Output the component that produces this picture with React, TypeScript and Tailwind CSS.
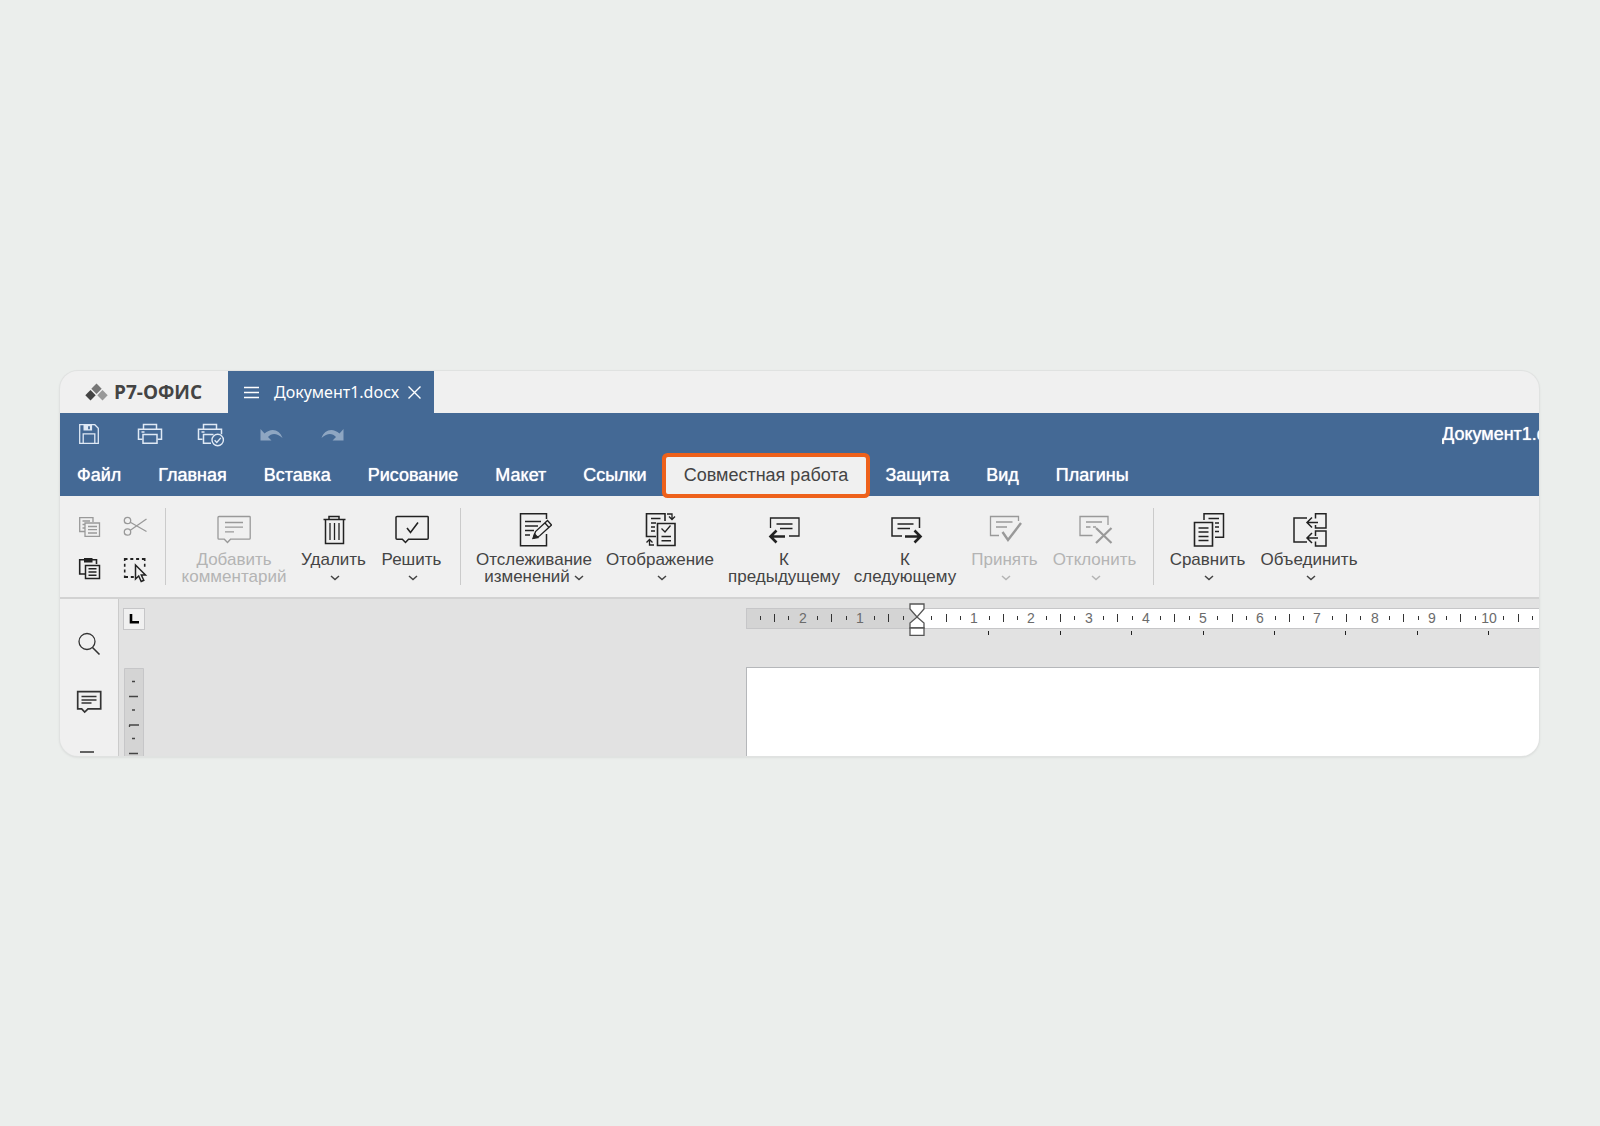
import type { ReactNode } from "react";
import clsx from "clsx";

interface IconProps {
  children: ReactNode;
  size?: number;
}

function Icon({ children, size = 36 }: IconProps) {
  return (
    <svg
      width={size}
      height={size}
      viewBox={`0 0 ${size} ${size}`}
      fill="none"
      stroke="currentColor"
      strokeWidth="1.3"
      className="shrink-0"
      aria-hidden
    >
      {children}
    </svg>
  );
}

function Chevron({ className }: { className?: string }) {
  return (
    <svg width="10" height="6" viewBox="0 0 10 6" fill="none" stroke="currentColor" strokeWidth="1.5" className={className} aria-hidden>
      <path d="M1 1l4 3.5L9 1" />
    </svg>
  );
}

const icons = {
  save: (
    <Icon size={28}>
      <path d="M4.7 4.7h15.1l3.5 3.5v15.1H4.7z" />
      <path d="M8.2 23.3v-9.5h11.6v9.5" />
      <path d="M8.5 5h8.6v5.6H8.5z" fill="currentColor" stroke="none" />
      <path d="M14 6.2v3" stroke="#446995" strokeWidth="1.8" />
    </Icon>
  ),
  print: (
    <Icon size={28}>
      <path d="M7.5 9V4.5h13V9M6.5 19.3H2.5V9.2h23v10.1h-4" strokeWidth="1.5" />
      <path d="M7 14.5h14v8.8H7zM5.5 12h3" strokeWidth="1.5" />
    </Icon>
  ),
  quickPrint: (
    <Icon size={28}>
      <path d="M6.5 9V4.5h13V9M5.5 19.3h-4V9.2h23v5" strokeWidth="1.5" />
      <path d="M14 23.3H6.5v-8.8h10M4.5 12h3" strokeWidth="1.5" />
      <circle cx="20.7" cy="20" r="5.7" strokeWidth="1.4" />
      <path d="M17.6 20.2l2.2 2.3 4-4.6" strokeWidth="1.4" />
    </Icon>
  ),
  undo: (
    <Icon size={28}>
      <path d="M2.5 9v11.5h11L10 17c3.5-4 8.500-4.500 14.500 1C21.500 9 13 7.500 6.500 13.500z" fill="currentColor" stroke="none" />
    </Icon>
  ),
  redo: (
    <Icon size={28}>
      <path d="M24.500 9v11.500h-11L17 17C13.500 13 8.500 12.500 2.500 18 5.500 9 14 7.500 20.500 13.500z" fill="currentColor" stroke="none" />
    </Icon>
  ),
  copy: (
    <Icon size={28}>
      <path d="M9 17.500H3.700V3.700H17V8" />
      <path d="M9 9h14.500v13.300H9zM12 12.500h9M12 15.700h9M12 19h9M6.500 7H14M6.500 10.500h2M6.500 14h2" />
    </Icon>
  ),
  cut: (
    <Icon size={28}>
      <circle cx="6.500" cy="6.500" r="3.200" />
      <circle cx="6.500" cy="18" r="3.200" />
      <path d="M9.300 8.200L25.500 17.500M9.300 16.300L25.500 5" />
    </Icon>
  ),
  paste: (
    <Icon size={28}>
      <path d="M9 19H3.700V4.700h16.800V9" strokeWidth="1.600" />
      <path d="M8 3h8.500v4.500H8z" fill="currentColor" stroke="none" />
      <path d="M9.500 10.500h14v13h-14zM12.500 13.700h8M12.500 17h8M12.500 20.300h8" strokeWidth="1.500" />
    </Icon>
  ),
  select: (
    <Icon size={28}>
      <path d="M3.500 4H24" strokeDasharray="3 2.800" strokeWidth="1.800" />
      <path d="M3.700 3v20M23.700 3v10" strokeDasharray="3 2.800" strokeWidth="1.600" />
      <path d="M4 22h10" strokeDasharray="3 2.800" strokeWidth="1.800" />
      <path d="M14.500 10v14l3.200-3 2.500 5.500 2.600-1.200-2.500-5.300h4.200z" fill="#f0f0f0" strokeWidth="1.500" />
    </Icon>
  ),
  addComment: (
    <Icon>
      <path d="M3 4.500h30.500a.7.7 0 0 1 .7.700v21a1 1 0 0 1-1 1H14.500L11.500 30.500l-3.200-3.300H3a1 1 0 0 1-1-1V5.500a1 1 0 0 1 1-1z" />
      <path d="M9 10.500h18M9 15.200h18M9 19.800h9" />
    </Icon>
  ),
  remove: (
    <Icon>
      <path d="M13 7.500V4.500h10v3M7.500 7.500h22M9.500 7.500v24h18v-24" strokeWidth="1.500" />
      <path d="M14 11v17M18.500 11v17M23 11v17" />
    </Icon>
  ),
  resolve: (
    <Icon>
      <path d="M3 4.500h30.500a.7.7 0 0 1 .7.700v21a1 1 0 0 1-1 1H14.500L11.500 30.500l-3.200-3.300H3a1 1 0 0 1-1-1V5.500a1 1 0 0 1 1-1z" strokeWidth="1.500" />
      <path d="M13 16l3.500 4.500 7.500-10" strokeWidth="1.600" />
    </Icon>
  ),
  track: (
    <Icon>
      <path d="M30.500 7V1.700H4.500v32h26V22" strokeWidth="1.500" />
      <path d="M9 9.500h16M9 14h13M9 18.500h9M9 23h5" strokeWidth="1.600" />
      <path d="M17.500 26l2-6.500L31.500 8.500l4 4.500-12 11zM29 11l4 4.500" />
      <path d="M17 26.500l1.500-4.500 3.500 3.500z" fill="currentColor" />
    </Icon>
  ),
  display: (
    <Icon>
      <path d="M14 24.500H4.500V1.700h18.500V9" strokeWidth="1.600" />
      <path d="M9 6.500h9.500M9 11h5M9 15h4M9 19h4" strokeWidth="1.500" />
      <path d="M15.500 11.500h17.500v22h-17.500zM19.500 24.500h9.500M19.500 28.800h9.500" strokeWidth="1.600" />
      <path d="M19.500 16.500l3.500 3.500 5.500-6.500" />
      <path d="M25 2h5v5M27 4.500l3 3 3-3M12 33H7.500v-5M4.500 30.500l3-3 3 3" />
    </Icon>
  ),
  previous: (
    <Icon>
      <path d="M4.500 16V6h28.500v18H23" />
      <path d="M10.500 12h16M14 16.500h12.500" />
      <path d="M19 24.500H5M10.500 18.500L4.500 24.500l6 6" strokeWidth="2.600" />
    </Icon>
  ),
  next: (
    <Icon>
      <path d="M32.500 16V6H5v18h10" strokeWidth="1.500" />
      <path d="M10.500 12h16M10.500 16.500h12.500" />
      <path d="M18 24.500h15M27.500 18.500l6 6-6 6" strokeWidth="2.600" />
    </Icon>
  ),
  accept: (
    <Icon>
      <path d="M31.500 9V4.500h-28v19h8.500" />
      <path d="M9 10h16.500M9 15h11" />
      <path d="M15.500 20l5.500 8L34 11" strokeWidth="2.400" />
    </Icon>
  ),
  reject: (
    <Icon>
      <path d="M31 13V4.500H3v19h12.500" />
      <path d="M9 10h16M9 15h4.500M16 15h3" />
      <path d="M19 16l15.500 15M34.500 16L19 31" strokeWidth="2.200" />
    </Icon>
  ),
  compare: (
    <Icon>
      <path d="M14 8V1.700h19.500v23.500H25" strokeWidth="1.500" />
      <path d="M4.500 10.500h18v23.500h-18z" strokeWidth="1.600" />
      <path d="M8.500 16h10M8.500 20h10M8.500 24.500h10M8.500 28.500h10M18.500 6.500h10.500M25 11h4M25 15h4M25 19.500h4" strokeWidth="1.500" />
    </Icon>
  ),
  merge: (
    <Icon>
      <path d="M16 6H3v24h13" strokeWidth="1.500" />
      <path d="M24.500 6.500V1.700H35V16H24.500v-3M24.500 24v-5H35v15H24.500v-4.500" strokeWidth="1.500" />
      <path d="M27 10.500H16.500M21 5.500l-5 5 5 5M27 26H16.500M21 21l-5 5 5 5" strokeWidth="1.500" />
    </Icon>
  ),
};

const menu = [
  "Файл",
  "Главная",
  "Вставка",
  "Рисование",
  "Макет",
  "Ссылки",
  "Совместная работа",
  "Защита",
  "Вид",
  "Плагины",
];

const ACTIVE = "Совместная работа";

const quickActions = [
  { label: "Сохранить", icon: icons.save },
  { label: "Печать", icon: icons.print },
  { label: "Быстрая печать", icon: icons.quickPrint },
  { label: "Отменить", icon: icons.undo, disabled: true },
  { label: "Повторить", icon: icons.redo, disabled: true },
];

const clipboard = [
  { label: "Копировать", icon: icons.copy, disabled: true },
  { label: "Вырезать", icon: icons.cut, disabled: true },
  { label: "Вставить", icon: icons.paste },
  { label: "Выделить всё", icon: icons.select },
];

interface Tool {
  lines: string[];
  icon: ReactNode;
  width: string;
  menu?: boolean;
  disabled?: boolean;
}

const toolGroups: Tool[][] = [
  [
    { lines: ["Добавить", "комментарий"], icon: icons.addComment, width: "w-[120px]", disabled: true },
    { lines: ["Удалить"], icon: icons.remove, width: "w-[79px]", menu: true },
    { lines: ["Решить"], icon: icons.resolve, width: "w-[77px]", menu: true },
  ],
  [
    { lines: ["Отслеживание", "изменений"], icon: icons.track, width: "w-[130px]", menu: true },
    { lines: ["Отображение"], icon: icons.display, width: "w-[122px]", menu: true },
    { lines: ["К", "предыдущему"], icon: icons.previous, width: "w-[126px]" },
    { lines: ["К", "следующему"], icon: icons.next, width: "w-[116px]" },
    { lines: ["Принять"], icon: icons.accept, width: "w-[83px]", menu: true, disabled: true },
    { lines: ["Отклонить"], icon: icons.reject, width: "w-[97px]", menu: true, disabled: true },
  ],
  [
    { lines: ["Сравнить"], icon: icons.compare, width: "w-[91px]", menu: true },
    { lines: ["Объединить"], icon: icons.merge, width: "w-[112px]", menu: true },
  ],
];

function ToolButton({ tool }: { tool: Tool }) {
  return (
    <button
      type="button"
      disabled={tool.disabled}
      className={clsx(
        "flex shrink-0 flex-col items-center text-[17px] leading-[17px] whitespace-nowrap",
        tool.width,
        tool.disabled ? "text-[#b4b4b4]" : "text-[#444]"
      )}
    >
      <span className={tool.disabled ? "text-[#999]" : "text-[#222]"}>{tool.icon}</span>
      <span className="mt-[3px]">{tool.lines[0]}</span>
      <span className="flex h-[17px] items-center gap-1">
        {tool.lines[1]}
        {tool.menu && <Chevron className={clsx("mt-[3px]", !tool.lines[1] && "ml-[3px]")} />}
      </span>
    </button>
  );
}

// one centimetre on the ruler
const UNIT = 57.2;
const ORIGIN = 171;

function HorizontalRuler() {
  const quarters = Array.from({ length: 55 }, (_, i) => i - 11);
  const tabStops = Array.from({ length: 8 }, (_, i) => i + 1);

  return (
    <svg width="793" height="37" viewBox="0 0 793 37" className="block" aria-hidden>
      <rect x="0" y="9" width="793" height="21" fill="#fff" />
      <rect x="0" y="9" width={ORIGIN} height="21" fill="#d4d4d4" />
      <path d="M0 9.500h793M0 29.500h793M.5 9v21" stroke="#c6c6c8" />
      {quarters.map((q) => {
        const x = Math.round(ORIGIN + (q * UNIT) / 4);
        if (q === 0) return null;
        if (q % 4 === 0) {
          return (
            <text key={q} x={x} y="24" textAnchor="middle" fontSize="14" fill="#6b6b6b">
              {Math.abs(q / 4)}
            </text>
          );
        }
        const half = q % 2 === 0;
        return <rect key={q} x={x} y={half ? 15 : 17} width="1" height={half ? 8 : 4} fill="#333" />;
      })}
      {tabStops.map((n) => (
        <rect key={n} x={Math.round(ORIGIN + n * 71.4)} y="32" width="1" height="4" fill="#222" />
      ))}
      <g fill="#fff" stroke="#555" strokeWidth="1.300">
        <path d="M164 5h14v5l-7 8-7-8z" />
        <path d="M171 18l7 6v5h-14v-5z" />
        <path d="M164 29h14v7.300h-14z" />
      </g>
    </svg>
  );
}

function VerticalRuler() {
  return (
    <svg width="20" height="88" viewBox="0 0 20 88" className="block" aria-hidden>
      <path d="M.5 88V.5h19V88" fill="#d4d4d4" stroke="#c6c6c8" />
      <path d="M8 13.500h3M8 42h3M8 70.500h3M5 28.500h9M5 57h10M5.500 57v2M5 85.500h9" stroke="#444" strokeWidth="1.300" />
    </svg>
  );
}

export default function App() {
  return (
    <main className="flex min-h-screen items-center bg-[#ebeeec] pt-px pr-[61px] pl-[60px] font-['Liberation_Sans',Arial,sans-serif]">
      <div className="w-full overflow-hidden rounded-[18px] bg-[#f0f0f0] shadow-[0_0_0_1px_#e0e2e1,0_1px_3px_rgba(0,0,0,0.12)]">
        <div className="flex h-[42px]">
          <div className="flex w-[168px] items-center gap-[6px] pl-[25px] text-[#444]">
            <svg width="23" height="18" viewBox="0 0 23 18" aria-hidden>
              <path d="M5.500 7l5.200 5.200-5.200 5.200L.3 12.200z" fill="#444" />
              <path d="M11.500.5l5.200 5.200-5.200 5.200-5.200-5.200z" fill="#777" />
              <path d="M17.500 7l5.200 5.200-5.200 5.200-5.200-5.200z" fill="#999" />
            </svg>
            <span className="font-['Open_Sans','Noto_Sans',sans-serif] text-[19px] font-bold">Р7-ОФИС</span>
          </div>
          <div className="flex w-[206px] items-center bg-[#446995] pl-4 text-white">
            <svg width="15" height="13" viewBox="0 0 15 13" stroke="currentColor" strokeWidth="1.500" aria-hidden>
              <path d="M0 1.500h15M0 6.500h15M0 11.500h15" />
            </svg>
            <span className="ml-[15px] w-[125px] font-['Noto_Sans',sans-serif] text-base whitespace-nowrap">Документ1.docx</span>
            <button type="button" aria-label="Закрыть" className="ml-[9px]">
              <svg width="13" height="13" viewBox="0 0 13 13" stroke="currentColor" strokeWidth="1.400" aria-hidden>
                <path d="M.5.5l12 12M12.500.5l-12 12" />
              </svg>
            </button>
          </div>
        </div>

        <header className="bg-[#446995] text-white">
          <div className="flex h-[42px] items-center justify-between pl-[15px]">
            <div className="flex gap-[33px]">
              {quickActions.map((action) => (
                <button
                  key={action.label}
                  type="button"
                  aria-label={action.label}
                  disabled={action.disabled}
                  className={action.disabled ? "text-[#8ea6c2]" : "text-[#dfe9f5]"}
                >
                  {action.icon}
                </button>
              ))}
            </div>
            <span className="w-[97px] overflow-hidden text-lg whitespace-nowrap [text-shadow:0_0_1px_#fff]">Документ1.docx</span>
          </div>
          <nav className="-ml-px flex h-[41px] gap-px">
            {menu.map((item) => (
              <button
                key={item}
                type="button"
                className={clsx(
                  "shrink-0 px-[18px] pb-[2px] text-lg whitespace-nowrap",
                  item === ACTIVE
                    ? "relative my-[2px] rounded-[2px] bg-[#f0f0f0] text-[#444] shadow-[0_0_0_4px_#ee611b]"
                    : "[text-shadow:0_0_1px_#fff]"
                )}
              >
                {item}
              </button>
            ))}
          </nav>
        </header>

        <div className="flex h-[103px] border-b-2 border-[#d2d2d2] pt-4 pl-4">
          <div className="grid w-[74px] grid-cols-[45px_28px] content-start gap-y-[13px] pt-[2px]">
            {clipboard.map((action) => (
              <button
                key={action.label}
                type="button"
                aria-label={action.label}
                disabled={action.disabled}
                className={action.disabled ? "text-[#999]" : "text-[#222]"}
              >
                {action.icon}
              </button>
            ))}
          </div>
          {toolGroups.map((group, i) => (
            <div key={i} className="flex">
              <div className={clsx("-mt-1 mr-2 h-[77px] w-px bg-[#cbcbcb]", i === 0 ? "ml-[15px]" : "ml-[10px]")} />
              {group.map((tool) => (
                <ToolButton key={tool.lines.join(" ")} tool={tool} />
              ))}
            </div>
          ))}
        </div>

        <div className="flex h-[157px]">
          <aside className="flex w-[59px] shrink-0 flex-col items-center overflow-hidden border-r border-[#cbcbcb] pt-[31px] text-[#333]">
            <button type="button" aria-label="Поиск">
              <Icon size={28}>
                <circle cx="12" cy="11.500" r="8" />
                <path d="M17.500 17.500l7 7" strokeWidth="1.600" />
              </Icon>
            </button>
            <button type="button" aria-label="Комментарии" className="mt-[30px]">
              <Icon size={28}>
                <path d="M2.700 3.700h23v17.200H13L9.700 24l-3-3.100h-4z" strokeWidth="1.700" />
                <path d="M6.500 8.500h15M6.500 12h15M6.500 15h10" strokeWidth="1.500" />
              </Icon>
            </button>
            <button type="button" aria-label="Заголовки" className="mt-[34px]">
              <Icon size={28}>
                <path d="M5 2h14M5 9h18M5 16h18" strokeWidth="1.500" />
              </Icon>
            </button>
          </aside>

          <div className="flex min-w-0 flex-1 overflow-hidden bg-[#e2e2e2]">
            <div className="w-[627px] shrink-0 pt-[9px] pl-1">
              <button type="button" aria-label="Табуляция" className="flex size-[22px] items-center justify-center border border-[#c6c6c8] bg-[#f0f0f0]">
                <svg width="10" height="10" viewBox="0 0 10 10" fill="none" stroke="#000" strokeWidth="2.600" aria-hidden>
                  <path d="M2 0v8.200h8" />
                </svg>
              </button>
              <div className="mt-[38px] pl-px">
                <VerticalRuler />
              </div>
            </div>
            <div className="flex min-w-0 flex-1 flex-col overflow-hidden">
              <HorizontalRuler />
              <div className="mt-[31px] flex-1 border-t border-l border-[#b5b7ba] bg-white" />
            </div>
          </div>
        </div>
      </div>
    </main>
  );
}
